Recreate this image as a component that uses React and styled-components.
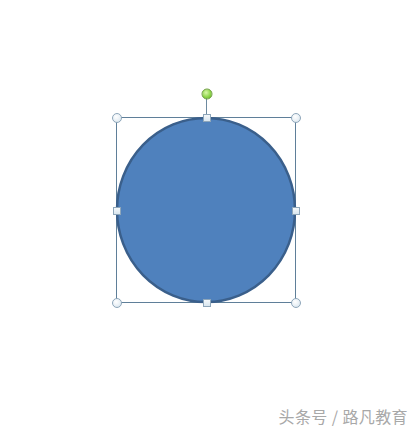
import React from "react";
import styled, { createGlobalStyle } from "styled-components";

const GlobalStyle = createGlobalStyle`
  html, body {
    margin: 0;
    padding: 0;
    background: #ffffff;
  }
  * {
    box-sizing: border-box;
  }
`;

const Page = styled.div`
  width: 417px;
  height: 432px;
  display: flex;
  flex-direction: column;
  padding: 117px 0 0 116px;
  background: #ffffff;
  overflow: hidden;
`;

const Frame = styled.div`
  position: relative;
  width: 180px;
  height: 186px;
  border: 1px solid #5f7f99;
`;

const Shape = styled.svg`
  position: absolute;
  left: -1px;
  top: -1px;
  overflow: visible;
`;

const Handle = styled.div`
  position: absolute;
  left: ${(p) => p.$x}px;
  top: ${(p) => p.$y}px;
  transform: translate(-50%, -50%);
  width: ${(p) => (p.$round ? 10 : 8)}px;
  height: ${(p) => (p.$round ? 10 : 8)}px;
  border-radius: ${(p) => (p.$round ? "50%" : "0")};
  border: 1px solid #8ea6ba;
  background: ${(p) =>
    p.$round
      ? "radial-gradient(circle at 40% 35%, #ffffff 0%, #e6eef4 60%, #cbd9e4 100%)"
      : "linear-gradient(#f4f8fb, #d9e6ef)"};
`;

const RotateStem = styled.div`
  position: absolute;
  left: 89px;
  top: -20px;
  width: 1px;
  height: 19px;
  background: #6d8aa0;
`;

const RotateKnob = styled.div`
  position: absolute;
  left: 89.5px;
  top: -24px;
  transform: translate(-50%, -50%);
  width: 11px;
  height: 11px;
  border-radius: 50%;
  border: 1px solid #6c9e3c;
  background: radial-gradient(circle at 40% 35%, #d8f7a8 0%, #8fd64a 55%, #5eab28 100%);
`;

const Watermark = styled.div`
  margin-top: auto;
  align-self: flex-end;
  margin-right: 9px;
  margin-bottom: 5px;
  font-family: "Noto Sans CJK SC", "Noto Sans", sans-serif;
  font-size: 16px;
  letter-spacing: 0.4px;
  line-height: 22px;
  color: #a8a8a8;
  white-space: nowrap;
`;

const handles = [
  { x: 0, y: 0, round: true },
  { x: 89.5, y: 0 },
  { x: 179, y: 0, round: true },
  { x: 0, y: 93 },
  { x: 179, y: 93 },
  { x: 0, y: 185, round: true },
  { x: 89.5, y: 185 },
  { x: 179, y: 185, round: true },
];

export default function App() {
  return (
    <>
      <GlobalStyle />
      <Page>
        <Frame>
          <Shape width="180" height="186" viewBox="0 0 180 186">
            <ellipse
              cx="90"
              cy="93"
              rx="89"
              ry="92"
              fill="#4f81bd"
              stroke="#3a5f8b"
              strokeWidth="2.5"
            />
          </Shape>
          <RotateStem />
          <RotateKnob />
          {handles.map((h, i) => (
            <Handle key={i} $x={h.x} $y={h.y} $round={h.round} />
          ))}
        </Frame>
        <Watermark>头条号 / 路凡教育</Watermark>
      </Page>
    </>
  );
}
